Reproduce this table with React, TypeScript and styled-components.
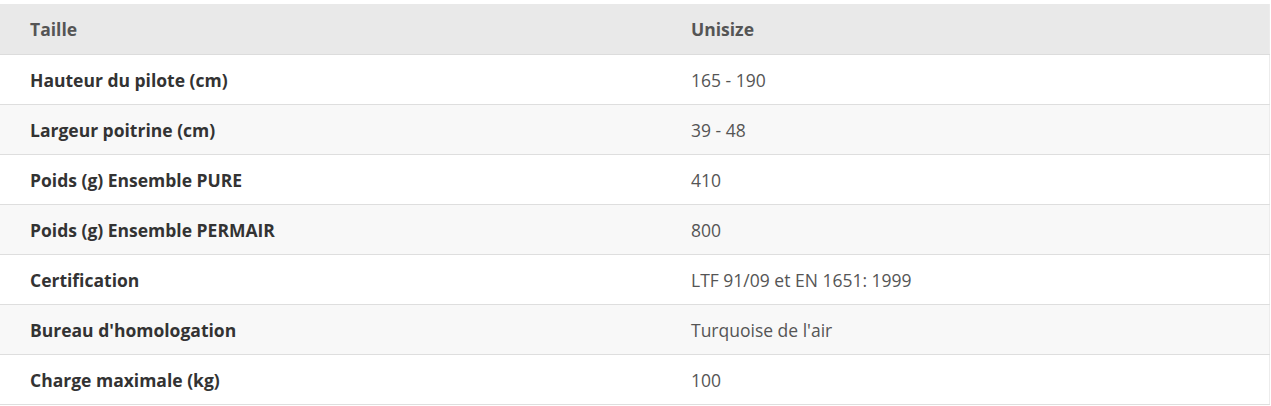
import React from "react";
import styled, { createGlobalStyle } from "styled-components";

const Global = createGlobalStyle`
  html, body { margin: 0; padding: 0; background: #ffffff; }
  body { font-family: "Open Sans", "Liberation Sans", sans-serif; }
`;

const Wrap = styled.div`
  padding-top: 4px;
  width: 1271px;
`;

const Table = styled.table`
  width: 1270px;
  border-collapse: collapse;
  table-layout: fixed;
  border-right: 1px solid #ececec;
`;

const HeadRow = styled.tr`
  background: #e9e9e9;
  border-bottom: 1px solid #dcdcdc;
`;

const Row = styled.tr<{ $alt: boolean }>`
  background: ${(p) => (p.$alt ? "#f8f8f8" : "#ffffff")};
  border-bottom: 1px solid #dedede;
`;

const HeadCell = styled.th<{ $w?: string }>`
  height: 50px;
  padding: 0 0 0 30px;
  text-align: left;
  font-size: 17.5px;
  font-weight: 700;
  color: #555555;
  width: ${(p) => p.$w ?? "auto"};
  box-sizing: border-box;
`;

const LabelCell = styled.td`
  height: 50px;
  padding: 1px 0 0 30px;
  box-sizing: border-box;
  font-size: 17.5px;
  font-weight: 700;
  color: #333333;
`;

const ValueCell = styled.td`
  height: 50px;
  padding: 1px 0 0 30px;
  box-sizing: border-box;
  font-size: 17.5px;
  font-weight: 400;
  color: #555555;
`;

const rows: [string, string][] = [
  ["Hauteur du pilote (cm)", "165 - 190"],
  ["Largeur poitrine (cm)", "39 - 48"],
  ["Poids (g) Ensemble PURE", "410"],
  ["Poids (g) Ensemble PERMAIR", "800"],
  ["Certification", "LTF 91/09 et EN 1651: 1999"],
  ["Bureau d'homologation", "Turquoise de l'air"],
  ["Charge maximale (kg)", "100"],
];

export default function App() {
  return (
    <Wrap>
      <Global />
      <Table>
        <thead>
          <HeadRow>
            <HeadCell $w="661px">Taille</HeadCell>
            <HeadCell>Unisize</HeadCell>
          </HeadRow>
        </thead>
        <tbody>
          {rows.map(([k, v], i) => (
            <Row key={k} $alt={i % 2 === 1}>
              <LabelCell>{k}</LabelCell>
              <ValueCell>{v}</ValueCell>
            </Row>
          ))}
        </tbody>
      </Table>
    </Wrap>
  );
}
